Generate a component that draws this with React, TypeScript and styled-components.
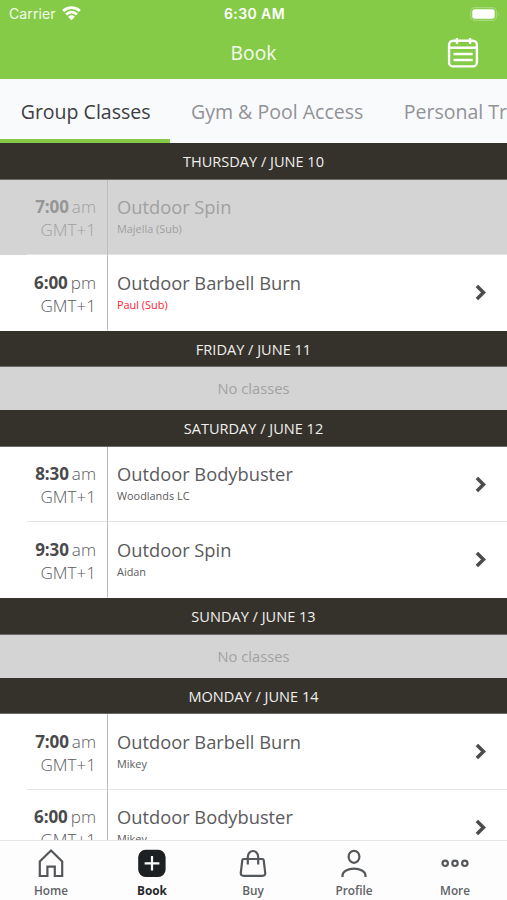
import React from "react";
import styled, { createGlobalStyle } from "styled-components";

const GlobalStyle = createGlobalStyle`
  *, *::before, *::after { box-sizing: border-box; }
  body { margin: 0; background: #fff; }
`;

const Screen = styled.div`
  width: 507px;
  height: 900px;
  display: flex;
  flex-direction: column;
  overflow: hidden;
  background: #fff;
  color: #58585a;
  font-family: "Open Sans", "Noto Sans", sans-serif;
`;

const TopBar = styled.header`
  flex: none;
  height: 79px;
  background: #85cb48;
  color: #fff;
`;

const StatusBar = styled.div`
  height: 27px;
  display: grid;
  grid-template-columns: 1fr auto 1fr;
  align-items: center;
  padding: 0 7px 0 9px;
  font-family: Inter, sans-serif;
`;

const Carrier = styled.div`
  display: flex;
  align-items: center;
  gap: 6px;
  font-size: 14px;
  letter-spacing: 0.1px;
  color: #f3faec;
`;

const Clock = styled.div`
  font-size: 14px;
  font-weight: 600;
  letter-spacing: 0.4px;
`;

const BatteryIcon = styled.svg`
  justify-self: end;
`;

const TitleBar = styled.div`
  height: 52px;
  display: grid;
  grid-template-columns: 1fr auto 1fr;
  align-items: center;
  padding-right: 28px;
  padding-left: 28px;
`;

const Title = styled.h1`
  grid-column: 2;
  margin: 0;
  font-size: 19.3px;
  font-weight: 400;
  line-height: 26px;
  color: #f6fcee;
`;

const CalendarIcon = styled.svg`
  justify-self: end;
`;

const Tabs = styled.nav`
  flex: none;
  height: 64px;
  display: flex;
  overflow: hidden;
  background: #f9fafc;
`;

const Tab = styled.div<{ $active?: boolean }>`
  flex: none;
  height: 64px;
  padding: 0 19.7px 0 20.7px;
  border-bottom: 4px solid ${(p) => (p.$active ? "#85cb48" : "transparent")};
  color: ${(p) => (p.$active ? "#3c3d40" : "#929297")};
  font-size: 19.55px;
  line-height: 66px;
  white-space: nowrap;
`;

const Schedule = styled.main`
  flex: 1;
  min-height: 0;
  overflow: hidden;
`;

const DayHeader = styled.h2`
  height: 36.5px;
  margin: 0;
  border-bottom: 1px solid #6b6a66;
  background: #35322c;
  color: #f0efec;
  font-size: 14.55px;
  font-weight: 400;
  line-height: 36px;
  text-align: center;
`;

const NoClasses = styled.div`
  height: 42.9px;
  background: #d4d4d4;
  color: #a2a2a2;
  font-size: 14.7px;
  line-height: 43px;
  text-align: center;
`;

const ClassRow = styled.div<{ $past?: boolean }>`
  height: 75.7px;
  display: grid;
  grid-template-columns: 27px 81px 1fr 36px;
  background: ${(p) => (p.$past ? "#d4d4d4" : "#fff")};
  color: ${(p) => (p.$past ? "#a0a0a0" : "#5b5b5d")};
`;

const Time = styled.div<{ $divided: boolean }>`
  grid-column: 2;
  padding: 15.7px 11px 0 0;
  border-right: 1px solid #bcbcbc;
  border-bottom: 1px solid ${(p) => (p.$divided ? "#e4e4e4" : "transparent")};
  font-size: 17.1px;
  font-weight: 300;
  line-height: 23px;
  text-align: right;
  white-space: nowrap;
`;

const Hour = styled.b<{ $past?: boolean }>`
  margin-right: 3px;
  font-size: 17px;
  font-weight: 700;
  letter-spacing: -0.1px;
  color: ${(p) => (p.$past ? "#969696" : "#4a4a4c")};
`;

const Details = styled.div<{ $divided: boolean }>`
  padding: 15.6px 0 0 9px;
  border-bottom: 1px solid ${(p) => (p.$divided ? "#e4e4e4" : "transparent")};
`;

const ClassName = styled.div`
  font-size: 18.3px;
  line-height: 24px;
  white-space: nowrap;
`;

const Instructor = styled.div<{ $alert?: boolean }>`
  font-size: 10.9px;
  line-height: 20px;
  color: ${(p) => (p.$alert ? "#ff2030" : "inherit")};
`;

const Action = styled.div<{ $divided: boolean }>`
  padding-top: 29px;
  border-bottom: 1px solid ${(p) => (p.$divided ? "#e4e4e4" : "transparent")};
`;

const ChevronIcon = styled.svg`
  display: block;
  margin-left: 3px;
`;

const BottomNav = styled.nav`
  flex: none;
  height: 60px;
  display: grid;
  grid-template-columns: repeat(5, 101px);
  border-top: 1px solid #e6e6e7;
  background: #fdfdfe;
`;

const NavItem = styled.div<{ $active?: boolean }>`
  display: flex;
  flex-direction: column;
  align-items: center;
  padding-top: 6px;
  padding-left: 1px;
  color: ${(p) => (p.$active ? "#25272a" : "#606265")};
  font-size: 11.8px;
  font-weight: ${(p) => (p.$active ? 700 : 600)};
`;

const NavLabel = styled.span`
  margin-top: 3px;
  line-height: 16px;
`;

const NavIcon = styled.svg.attrs({ width: 32, height: 32, viewBox: "0 0 32 32", fill: "none" })`
  stroke: #55585b;
  stroke-width: 2.2;
  flex: none;
`;

type Lesson = { time: string; half: string; name: string; by: string; past?: boolean; alert?: boolean };
type Day = { label: string; lessons: Lesson[] };

const days: Day[] = [
  {
    label: "THURSDAY / JUNE 10",
    lessons: [
      { time: "7:00", half: "am", name: "Outdoor Spin", by: "Majella (Sub)", past: true },
      { time: "6:00", half: "pm", name: "Outdoor Barbell Burn", by: "Paul (Sub)", alert: true },
    ],
  },
  { label: "FRIDAY / JUNE 11", lessons: [] },
  {
    label: "SATURDAY / JUNE 12",
    lessons: [
      { time: "8:30", half: "am", name: "Outdoor Bodybuster", by: "Woodlands LC" },
      { time: "9:30", half: "am", name: "Outdoor Spin", by: "Aidan" },
    ],
  },
  { label: "SUNDAY / JUNE 13", lessons: [] },
  {
    label: "MONDAY / JUNE 14",
    lessons: [
      { time: "7:00", half: "am", name: "Outdoor Barbell Burn", by: "Mikey" },
      { time: "6:00", half: "pm", name: "Outdoor Bodybuster", by: "Mikey" },
    ],
  },
];

const Row = ({ lesson, divided }: { lesson: Lesson; divided: boolean }) => (
  <ClassRow $past={lesson.past}>
    <Time $divided={divided}>
      <Hour $past={lesson.past}>{lesson.time}</Hour>
      {lesson.half}
      <br />
      GMT+1
    </Time>
    <Details $divided={divided}>
      <ClassName>{lesson.name}</ClassName>
      <Instructor $alert={lesson.alert}>{lesson.by}</Instructor>
    </Details>
    <Action $divided={divided}>
      {!lesson.past && (
        <ChevronIcon width="14" height="17" viewBox="0 0 14 17" fill="none" stroke="#4c4c4f" strokeWidth="3.5">
          <path d="M2.9 2 9.5 8.5 2.9 15" />
        </ChevronIcon>
      )}
    </Action>
  </ClassRow>
);

export default function App() {
  return (
    <Screen>
      <GlobalStyle />
      <TopBar>
        <StatusBar>
          <Carrier>
            Carrier
            <svg width="19" height="15" viewBox="0 0 19 15" fill="none" stroke="#fff" strokeWidth="2.8">
              <path d="M1.2 5a12 12 0 0 1 16.6 0M4.1 8.4a7.7 7.7 0 0 1 10.8 0" />
              <path d="M6.1 10.7a4.9 4.9 0 0 1 6.8 0L9.5 14.3Z" fill="#fff" stroke="none" />
            </svg>
          </Carrier>
          <Clock>6:30 AM</Clock>
          <BatteryIcon width="30" height="14" viewBox="0 0 30 14">
            <rect x=".6" y=".6" width="25.8" height="12.8" rx="4" fill="none" stroke="#a9d97e" strokeWidth="1.1" />
            <rect x="2.3" y="2.3" width="22.4" height="9.4" rx="2.5" fill="#fff" />
            <path d="M28 4.8q1.6 2.2 0 4.4Z" fill="#a9d97e" />
          </BatteryIcon>
        </StatusBar>
        <TitleBar>
          <Title>Book</Title>
          <CalendarIcon width="32" height="32" viewBox="0 0 32 32" fill="none" stroke="#fff" strokeWidth="2.4">
            <rect x="2.1" y="3.8" width="27.8" height="25.6" rx="4" />
            <path d="M2 10.8h28M9.9 1v6M23.1 1v6M6.5 17h19.2M6.5 23h19.2" />
          </CalendarIcon>
        </TitleBar>
      </TopBar>

      <Tabs>
        <Tab $active>Group Classes</Tab>
        <Tab>Gym &amp; Pool Access</Tab>
        <Tab>Personal Training</Tab>
      </Tabs>

      <Schedule>
        {days.map((day) => (
          <section key={day.label}>
            <DayHeader>{day.label}</DayHeader>
            {day.lessons.length === 0 && <NoClasses>No classes</NoClasses>}
            {day.lessons.map((lesson, i) => (
              <Row key={lesson.time} lesson={lesson} divided={i < day.lessons.length - 1} />
            ))}
          </section>
        ))}
      </Schedule>

      <BottomNav>
        <NavItem>
          <NavIcon>
            <path d="M4.8 29V14.5L16 3.5l11.2 11V29h-7.4v-9.3h-7.4V29Z" />
          </NavIcon>
          <NavLabel>Home</NavLabel>
        </NavItem>
        <NavItem $active>
          <NavIcon>
            <rect x="2.2" y="2.7" width="27.4" height="27.2" rx="7.5" fill="#1d2023" stroke="none" />
            <path d="M16 9v14.6M8.6 16.3h14.8" stroke="#fff" strokeWidth="2.2" />
          </NavIcon>
          <NavLabel>Book</NavLabel>
        </NavItem>
        <NavItem>
          <NavIcon>
            <path d="M6.5 12h19q1 0 1.2 1.2l1.5 12.6q.2 3-2.7 3h-19q-2.9 0-2.7-3l1.5-12.6q.2-1.2 1.2-1.2ZM10.8 17.5V9.8a5.2 5.8 0 0 1 10.4 0v7.7" />
          </NavIcon>
          <NavLabel>Buy</NavLabel>
        </NavItem>
        <NavItem>
          <NavIcon>
            <ellipse cx="16" cy="9.8" rx="5.4" ry="6" />
            <path d="M4.5 30v-1.4c0-9.2 23-9.2 23 0V30" />
          </NavIcon>
          <NavLabel>Profile</NavLabel>
        </NavItem>
        <NavItem>
          <NavIcon>
            <circle cx="6.2" cy="16.3" r="2.7" />
            <circle cx="16" cy="16.3" r="2.7" />
            <circle cx="25.8" cy="16.3" r="2.7" />
          </NavIcon>
          <NavLabel>More</NavLabel>
        </NavItem>
      </BottomNav>
    </Screen>
  );
}
